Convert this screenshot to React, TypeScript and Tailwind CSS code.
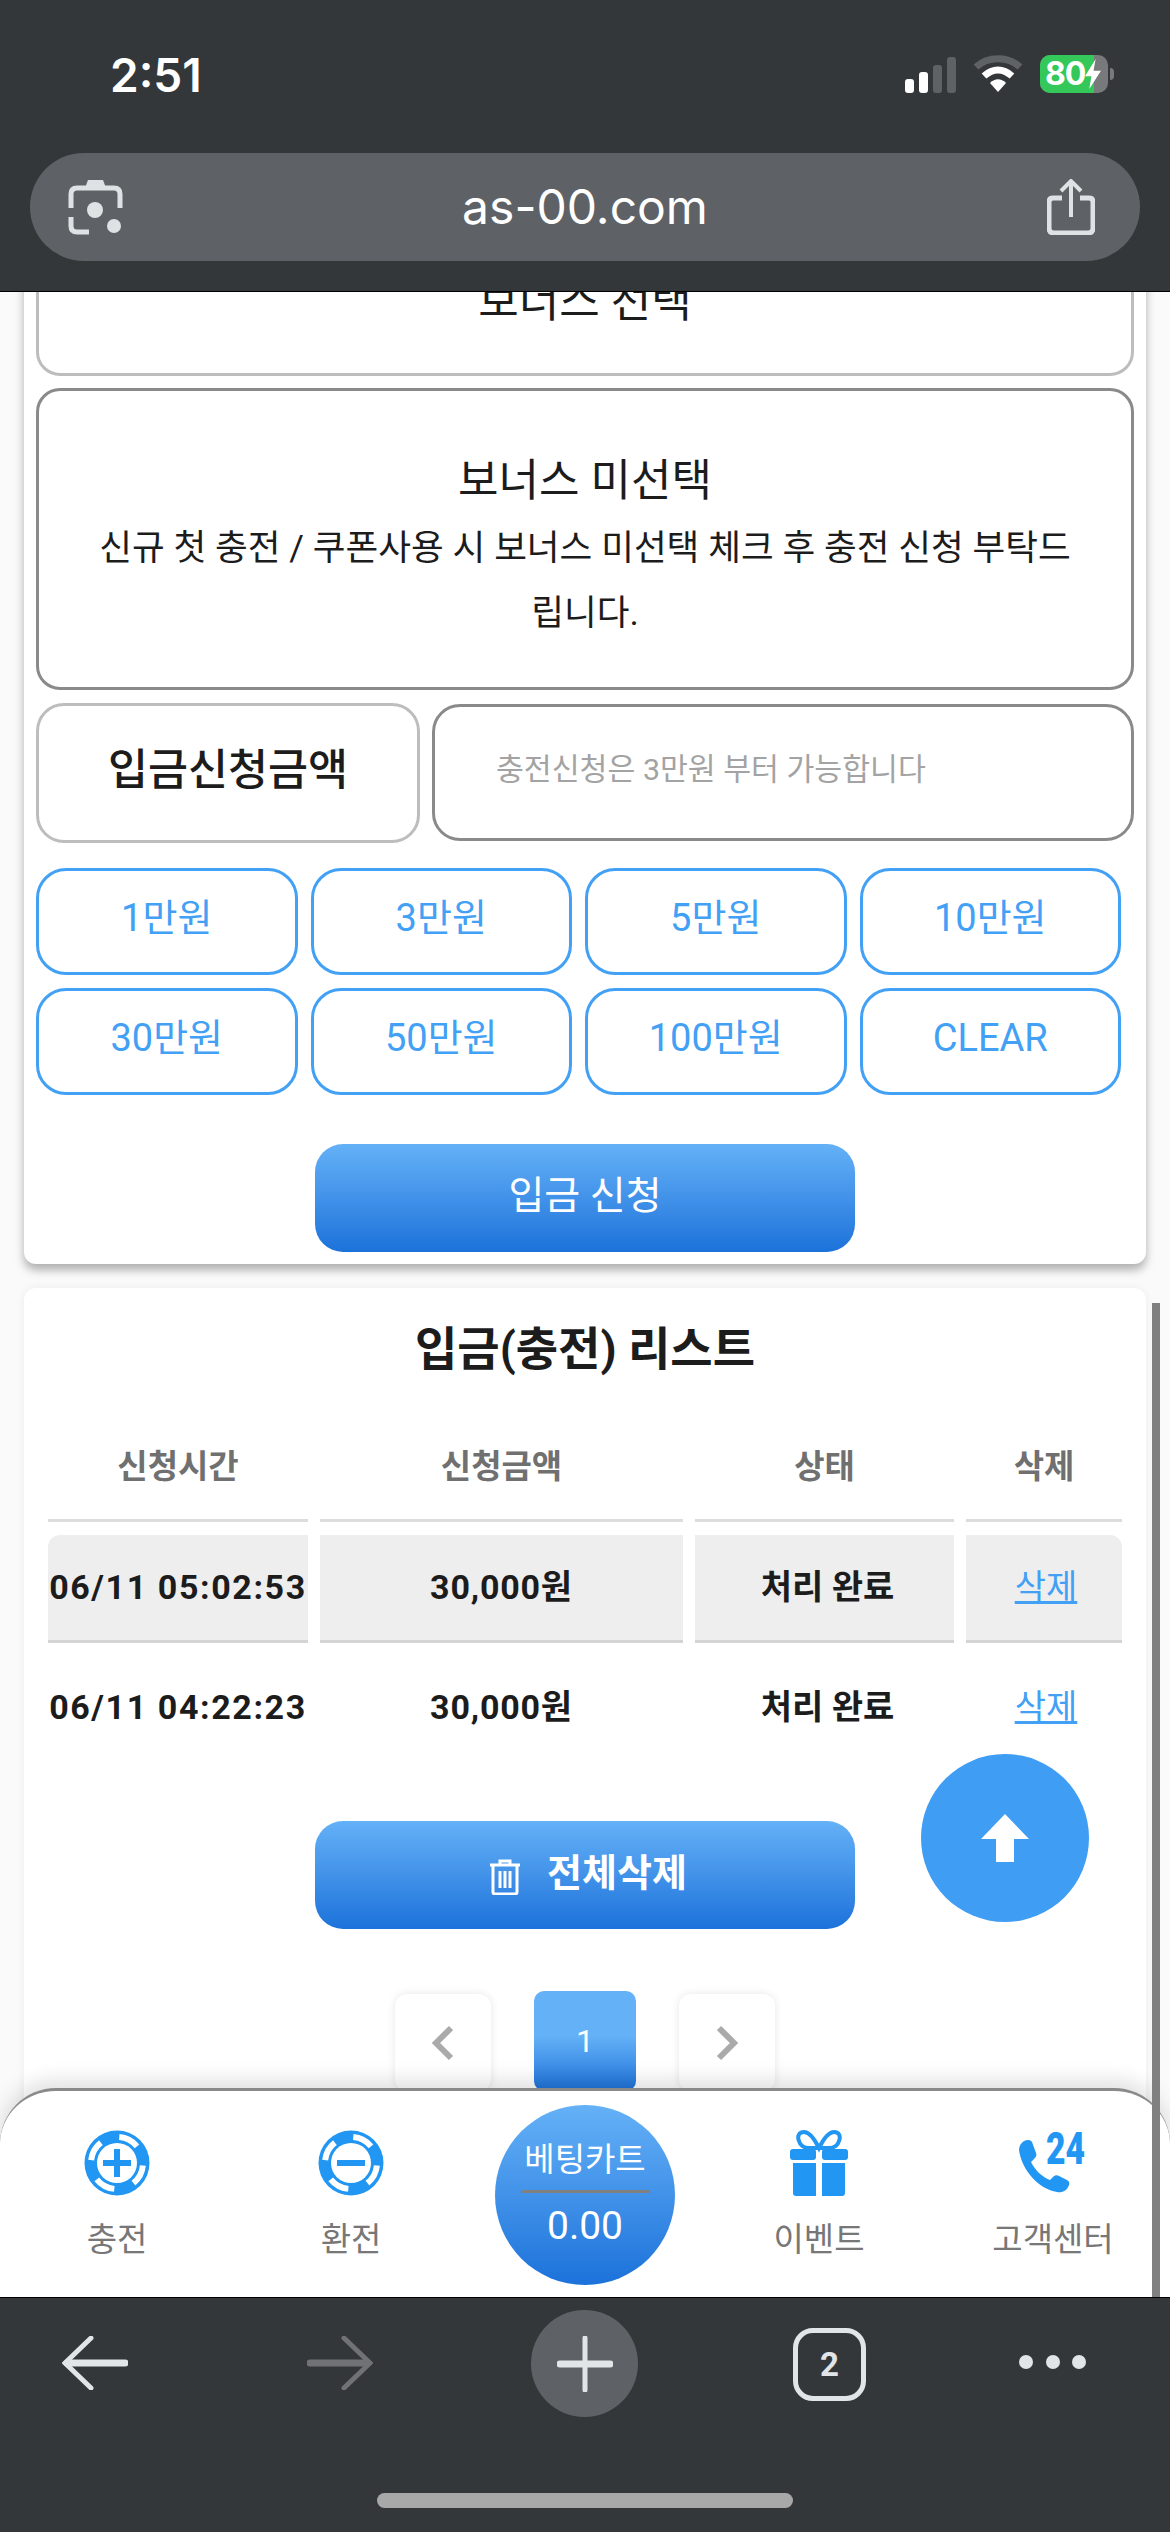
const amounts = ["1만원", "3만원", "5만원", "10만원", "30만원", "50만원", "100만원", "CLEAR"];

function Chip({ minus }: { minus?: boolean }) {
  return (
    <svg width="66" height="66" viewBox="0 0 66 66">
      <circle cx="33" cy="33" r="32.5" fill="#2196f3" />
      <circle cx="33" cy="33" r="26" fill="none" stroke="#fff" strokeWidth="6" strokeDasharray="20.4 20.4" transform="rotate(-85 33 33)" />
      <circle cx="33" cy="33" r="22" fill="#2196f3" />
      <circle cx="33" cy="33" r="20" fill="#fff" />
      <rect x="19" y="30" width="28" height="6" fill="#2196f3" />
      {!minus && <rect x="30" y="19" width="6" height="28" fill="#2196f3" />}
    </svg>
  );
}

function Gift() {
  return (
    <svg width="58" height="66" viewBox="0 0 58 66" fill="#2196f3">
      <path d="M29 18C24 8 19 2 14 2C9 2 7 6 9 11C10 15 14 18 19 18H39C44 18 48 15 49 11C51 6 49 2 44 2C39 2 34 8 29 18Z" fill="none" stroke="#2196f3" strokeWidth="4" />
      <rect x="0" y="19" width="26" height="11" rx="3" />
      <rect x="32" y="19" width="26" height="11" rx="3" />
      <path d="M3 33H26V66H6C4 66 3 65 3 63Z" />
      <path d="M32 33H55V63C55 65 54 66 52 66H32Z" />
    </svg>
  );
}

function Phone24() {
  return (
    <svg width="68" height="64" viewBox="0 0 68 64" fill="#2196f3" className="overflow-visible">
      <path d="M5 10C9 8 12 9 13 11L17 22C18 24 17 26 15 28L12 31C16 39 23 46 31 49L34 46C36 44 38 44 40 45L48 49C50 50 51 52 50 54C48 60 43 62 38 61C20 58 3 40 0 19C0 15 2 12 5 10Z" />
      <text x="27" y="33" fontFamily="Roboto, sans-serif" fontWeight="900" fontSize="44" textLength="39" lengthAdjust="spacingAndGlyphs">24</text>
    </svg>
  );
}

export default function App() {
  return (
    <div className="relative flex h-[2532px] w-[1170px] flex-col overflow-hidden bg-[#fafafa] font-[Roboto,'Noto_Sans_CJK_KR',sans-serif] text-[#1c1c1c]">
      {/* status + url bar */}
      <div className="z-20 h-[292px] shrink-0 border-b border-black bg-[#34373a] px-[30px]">
        <div className="flex h-[153px] items-start justify-between">
          <span className="ml-[80px] mt-[47px] font-[Inter,sans-serif] text-[46px] leading-[56px] font-semibold text-white">2:51</span>
          <div className="mt-[55px] mr-[26px] flex items-start">
            <svg width="52" height="36" viewBox="0 0 52 36" className="mt-[2px]">
              <rect x="0" y="22" width="9" height="14" rx="3" fill="#fff" />
              <rect x="14" y="15" width="9" height="21" rx="3" fill="#fff" />
              <rect x="28" y="8" width="9" height="28" rx="3" fill="#5f6265" />
              <rect x="42" y="0" width="9" height="36" rx="3" fill="#5f6265" />
            </svg>
            <svg width="50" height="38" viewBox="0 0 50 38" className="ml-[16px]">
              <path d="M3 12C15 1 35 1 47 12" fill="none" stroke="#5f6265" strokeWidth="7" />
              <path d="M11 21C20 13 30 13 39 21" fill="none" stroke="#fff" strokeWidth="7" />
              <path d="M17 28C22 23 28 23 33 28L25 37Z" fill="#fff" />
            </svg>
            <div className="relative ml-[17px] flex h-[38px] w-[68px] items-center overflow-hidden rounded-[10px] bg-[#78797b]">
              <div className="absolute inset-y-0 left-0 w-[54px] bg-[#34c759]" />
              <span className="relative pl-[5px] font-[Inter,sans-serif] text-[32px] leading-none font-bold tracking-[-1px] text-white">80</span>
              <svg width="16" height="30" viewBox="0 0 15 28" className="relative" fill="#fff">
                <path d="M10 0L0 16H6L4 28L15 11H8Z" />
              </svg>
            </div>
            <div className="mt-[13px] ml-[2px] h-[12px] w-[4px] rounded-r-full bg-[#78797b]" />
          </div>
        </div>
        <div className="flex h-[108px] items-center justify-between rounded-[54px] bg-[#5e6266] pr-[45px] pl-[38px]">
          <svg width="55" height="55" viewBox="0 0 55 55" fill="#dfe2e5">
            <path d="M17 8L20 0H35L38 8Z" />
            <path d="M3 28V14Q3 8 9 8H46Q52 8 52 14V28M3 37V46Q3 52 9 52H21" fill="none" stroke="#dfe2e5" strokeWidth="5" />
            <circle cx="27" cy="30" r="8" />
            <circle cx="46" cy="46" r="7" />
          </svg>
          <span className="font-[Inter,sans-serif] text-[48px] leading-none text-white">as-00.com</span>
          <svg width="48" height="56" viewBox="0 0 48 56" fill="none" stroke="#dfe2e5" strokeWidth="4">
            <path d="M15 19H6Q2 19 2 23V49Q2 54 7 54H41Q46 54 46 49V23Q46 19 42 19H33" strokeWidth="5" />
            <path d="M24 38V3M14 12L24 2L34 12" />
          </svg>
        </div>
      </div>

      {/* page content, scrolled */}
      <div className="flex-1 overflow-hidden px-[24px]">
        <div className="-mt-[80px] rounded-b-[12px] bg-white px-[12px] pt-[16px] pb-[12px] shadow-[0_6px_10px_rgba(0,0,0,0.3)]">
          <div className="flex h-[148px] items-center justify-center rounded-[24px] border-[3px] border-[#bdbdbd] text-[44px]">보너스 선택</div>
          <div className="mt-[12px] flex h-[302px] flex-col items-center justify-center rounded-[24px] border-[3px] border-[#8a8a8a] px-[50px] pt-[14px] text-center">
            <div className="text-[44px] leading-[70px]">보너스 미선택</div>
            <div className="text-[35.6px] leading-[65px]">신규 첫 충전 / 쿠폰사용 시 보너스 미선택 체크 후 충전 신청 부탁드립니다.</div>
          </div>
          <div className="mt-[13px] flex gap-[12px]">
            <div className="flex h-[140px] w-[384px] items-center justify-center rounded-[28px] border-[3px] border-[#bdbdbd] pb-[4px] text-[43.5px] font-medium">입금신청금액</div>
            <input
              className="mt-[1px] h-[137px] flex-1 rounded-[28px] border-[3px] border-[#8a8a8a] pb-[6px] pl-[61px] text-[30.3px] outline-none placeholder:text-[#a3a3a3]"
              placeholder="충전신청은 3만원 부터 가능합니다"
            />
          </div>
          <div className="mt-[25px] grid w-[1085px] grid-cols-4 gap-x-[13px] gap-y-[13px]">
            {amounts.map((a) => (
              <div key={a} className="flex h-[107px] items-center justify-center rounded-[30px] border-[3px] border-[#42a0f5] pb-[6px] text-[38px] text-[#42a0f5]">
                {a}
              </div>
            ))}
          </div>
          <div className="mx-auto mt-[49px] flex h-[108px] w-[540px] items-center justify-center rounded-[28px] bg-gradient-to-b from-[#64b1f7] to-[#1b72da] pb-[4px] text-[39px] text-white">입금 신청</div>
        </div>

        <div className="mt-[24px] h-[900px] rounded-[12px] bg-white px-[24px] pt-[24px] shadow-[0_0_10px_rgba(0,0,0,0.06)]">
          <div className="text-center text-[46px] leading-[74px] font-bold">입금(충전) 리스트</div>
          <div className="mt-[28px] grid grid-cols-[260px_363px_259px_156px] gap-x-[12px]">
            {["신청시간", "신청금액", "상태", "삭제"].map((h) => (
              <div key={h} className="flex h-[108px] items-center justify-center border-b-[3px] border-[#dcdcdc] text-[33px] font-bold text-[#707070]">{h}</div>
            ))}
          </div>
          <div className="mt-[13px] grid grid-cols-[260px_363px_259px_156px] gap-x-[12px] text-[34px] font-bold">
            <div className="flex h-[108px] items-center justify-center rounded-tl-[12px] border-b-[3px] border-[#d4d4d4] bg-[#eeeeee] tracking-[1.6px] whitespace-nowrap">06/11 05:02:53</div>
            <div className="flex h-[108px] items-center justify-center border-b-[3px] border-[#d4d4d4] bg-[#eeeeee] tracking-[0.8px]">30,000원</div>
            <div className="flex h-[108px] items-center justify-center border-b-[3px] border-[#d4d4d4] bg-[#eeeeee] pl-[6px]">처리 완료</div>
            <div className="flex h-[108px] items-center justify-center rounded-tr-[12px] border-b-[3px] border-[#d4d4d4] bg-[#eeeeee] pl-[4px] font-normal text-[#42a0f5] underline">삭제</div>
          </div>
          <div className="mt-[12px] grid grid-cols-[260px_363px_259px_156px] gap-x-[12px] text-[34px] font-bold">
            <div className="flex h-[104px] items-center justify-center tracking-[1.6px] whitespace-nowrap">06/11 04:22:23</div>
            <div className="flex h-[104px] items-center justify-center tracking-[0.8px]">30,000원</div>
            <div className="flex h-[104px] items-center justify-center pl-[6px]">처리 완료</div>
            <div className="flex h-[104px] items-center justify-center pl-[4px] font-normal text-[#42a0f5] underline">삭제</div>
          </div>
          <div className="mx-auto mt-[62px] flex h-[108px] w-[540px] items-center justify-center gap-[26px] rounded-[28px] bg-gradient-to-b from-[#64b1f7] to-[#1b72da] pb-[4px] pl-[6px] text-[38px] font-bold text-white">
            <svg width="32" height="36" viewBox="0 0 32 36" fill="none" stroke="#fff" strokeWidth="3" className="mt-[8px]">
              <path d="M1 6H31M11 6V2H21V6M4 6V33Q4 35 6 35H26Q28 35 28 33V6M11 12V29M16 12V29M21 12V29" />
            </svg>
            전체삭제
          </div>
          <div className="mt-[62px] flex justify-center gap-[43px]">
            <div className="mt-[3px] flex h-[97px] w-[96px] items-center justify-center rounded-[12px] bg-white shadow-[0_0_8px_rgba(0,0,0,0.1)]">
              <svg width="24" height="36" viewBox="0 0 24 36" fill="none" stroke="#aaaaaa" strokeWidth="6"><path d="M20 3L5 18L20 33" /></svg>
            </div>
            <div className="flex h-[100px] w-[102px] items-center justify-center rounded-[10px] bg-gradient-to-b from-[#64b1f7] from-45% to-[#1b72da] text-[32px] text-white">1</div>
            <div className="mt-[3px] flex h-[97px] w-[96px] items-center justify-center rounded-[12px] bg-white shadow-[0_0_8px_rgba(0,0,0,0.1)]">
              <svg width="24" height="36" viewBox="0 0 24 36" fill="none" stroke="#aaaaaa" strokeWidth="6"><path d="M4 3L19 18L4 33" /></svg>
            </div>
          </div>
        </div>
      </div>

      {/* page scrollbar */}
      <div className="absolute top-[1303px] left-[1152px] z-20 h-[994px] w-[8px] bg-[#808080]" />

      {/* scroll to top */}
      <div className="absolute top-[1754px] left-[921px] z-10 flex h-[168px] w-[168px] items-center justify-center rounded-full bg-[#3f9df3]">
        <svg width="48" height="48" viewBox="0 0 48 48" fill="#fff"><path d="M24 0L48 25H33V48H15V25H0Z" /></svg>
      </div>

      {/* bottom nav */}
      <div className="absolute top-[2088px] left-0 z-10 grid h-[209px] w-[1170px] grid-cols-5 rounded-t-[56px] border-t-[3px] border-[#8a8a8a] bg-white shadow-[0_-8px_20px_rgba(0,0,0,0.12)]">
        {[
          { label: "충전", icon: <Chip /> },
          { label: "환전", icon: <Chip minus /> },
          null,
          { label: "이벤트", icon: <Gift /> },
          { label: "고객센터", icon: <Phone24 /> },
        ].map((item, i) =>
          item ? (
            <div key={i} className="flex flex-col items-center pt-[36px] text-[33px] text-[#777777]">
              <div className="flex h-[72px] items-center">{item.icon}</div>
              <div className="mt-[19px] leading-[44px]">{item.label}</div>
            </div>
          ) : (
            <div key={i} className="flex justify-center pt-[14px]">
              <div className="flex h-[180px] w-[180px] flex-col items-center rounded-full bg-gradient-to-b from-[#64b1f7] to-[#1b72da] pt-[32px] text-white">
                <div className="text-[33px] leading-[46px]">베팅카트</div>
                <div className="mt-[7px] h-[3px] w-[129px] bg-[#808080]" />
                <div className="mt-[10px] text-[39px] leading-[46px]">0.00</div>
              </div>
            </div>
          ),
        )}
      </div>

      {/* browser toolbar */}
      <div className="z-20 flex h-[235px] shrink-0 flex-col border-t border-black bg-[#34373a]">
        <div className="flex h-[195px] items-start">
          <svg width="66" height="54" viewBox="0 0 66 54" fill="none" stroke="#e2e5e8" strokeLinecap="round" className="mt-[38px] ml-[62px]">
            <path d="M29 2L3 27L29 52" strokeWidth="5" />
            <path d="M5 27H63" strokeWidth="7" />
          </svg>
          <svg width="66" height="54" viewBox="0 0 66 54" fill="none" stroke="#707274" strokeLinecap="round" className="mt-[38px] ml-[179px]">
            <path d="M37 2L63 27L37 52" strokeWidth="5" />
            <path d="M3 27H61" strokeWidth="7" />
          </svg>
          <div className="mt-[12px] ml-[158px] flex h-[107px] w-[107px] items-center justify-center rounded-full bg-[#5e6266]">
            <svg width="56" height="56" viewBox="0 0 56 56" stroke="#e2e5e8" strokeLinecap="round">
              <path d="M28 2V54" strokeWidth="5" />
              <path d="M3 28H53" strokeWidth="7" />
            </svg>
          </div>
          <div className="mt-[30px] ml-[155px] flex h-[73px] w-[73px] items-center justify-center rounded-[20px] border-[5px] border-[#e2e5e8] text-[33px] font-bold text-[#e2e5e8]">2</div>
          <div className="mt-[57px] ml-[153px] flex w-[67px] justify-between">
            <div className="h-[14px] w-[14px] rounded-full bg-[#e2e5e8]" />
            <div className="h-[14px] w-[14px] rounded-full bg-[#e2e5e8]" />
            <div className="h-[14px] w-[14px] rounded-full bg-[#e2e5e8]" />
          </div>
        </div>
        <div className="mx-auto h-[15px] w-[416px] rounded-full bg-[#a8a8a8]" />
      </div>
    </div>
  );
}
